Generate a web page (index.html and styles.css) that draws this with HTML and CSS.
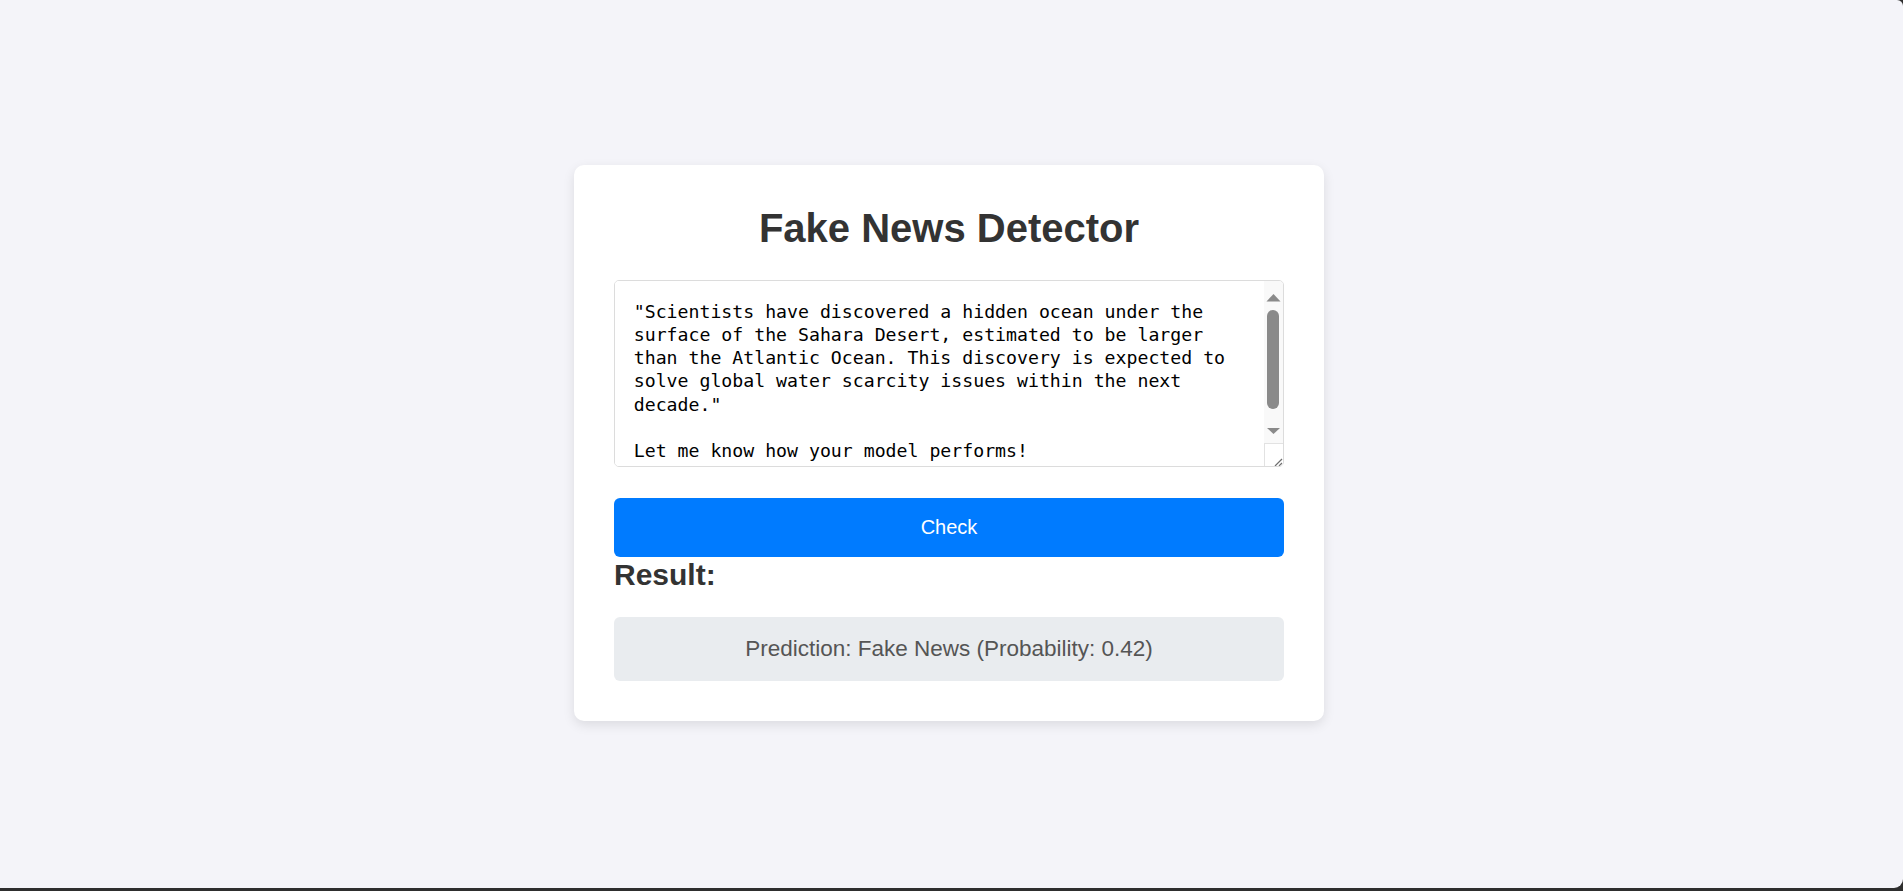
FILE: index.html
```html
<!DOCTYPE html>
<html lang="en">
<head>
<meta charset="utf-8">
<title>Fake News Detector</title>
<link rel="stylesheet" href="styles.css">
</head>
<body>
<div class="page">
  <div class="card">
    <h1 class="title">Fake News Detector</h1>
    <div class="input-wrap">
      <textarea class="news-input" spellcheck="false">"Scientists have discovered a hidden ocean under the surface of the Sahara Desert, estimated to be larger than the Atlantic Ocean. This discovery is expected to solve global water scarcity issues within the next decade."

Let me know how your model performs!
</textarea>
      <div class="scrollbar" aria-hidden="true">
        <div class="sb-btn sb-up">
          <svg width="19" height="25" viewBox="0 0 19 25"><polygon points="2.5,20.5 9.5,13 16.5,20.5" fill="#8a8a8a"/></svg>
        </div>
        <div class="sb-track"><div class="sb-thumb"></div></div>
        <div class="sb-btn sb-down">
          <svg width="19" height="25" viewBox="0 0 19 25"><polygon points="3,10 16,10 9.5,16" fill="#8a8a8a"/></svg>
        </div>
        <div class="sb-corner">
          <svg width="19" height="23" viewBox="0 0 19 23"><line x1="17" y1="15" x2="10" y2="22" stroke="#6f6f6f" stroke-width="1.2"/><line x1="17" y1="19" x2="14" y2="22" stroke="#6f6f6f" stroke-width="1.2"/></svg>
        </div>
      </div>
    </div>
    <button class="check-btn" type="button">Check</button>
    <h2 class="result-title">Result:</h2>
    <div class="result-box">Prediction: Fake News (Probability: 0.42)</div>
  </div>
</div>
</body>
</html>
```
FILE: styles.css
```css
html, body {
  margin: 0;
  padding: 0;
}
body {
  background: #2e2e2e;
  font-family: "Liberation Sans", Arial, sans-serif;
  height: 891px;
  overflow: hidden;
}
.page {
  box-sizing: border-box;
  height: 888px;
  padding-right: 5px;
  background: #f4f4f9;
  border-top-right-radius: 6px;
  border-bottom-right-radius: 9px;
  display: flex;
  align-items: center;
  justify-content: center;
}
.card {
  box-sizing: border-box;
  width: 750px;
  padding: 40px;
  background: #ffffff;
  border-radius: 10px;
  box-shadow: 0 4px 12px rgba(0, 0, 0, 0.1);
  display: flex;
  flex-direction: column;
  margin-top: -2px;
}
.title {
  margin: 0 0 29px;
  font-size: 40px;
  line-height: 46px;
  font-weight: bold;
  color: #333333;
  text-align: center;
}
.input-wrap {
  box-sizing: border-box;
  height: 187px;
  margin: 0 0 31px;
  border: 1.25px solid #dcdcdc;
  border-radius: 5px;
  overflow: hidden;
  display: flex;
  background: #ffffff;
}
.news-input {
  flex: 1;
  min-width: 0;
  box-sizing: border-box;
  height: 100%;
  margin: 0;
  padding: 18.5px 18.75px;
  border: none;
  font-family: "DejaVu Sans Mono", "Liberation Mono", monospace;
  font-size: 18.2px;
  line-height: 23.3px;
  color: #000000;
  background: #ffffff;
  resize: none;
  outline: none;
  overflow: hidden;
}
.scrollbar {
  width: 19px;
  flex: none;
  display: flex;
  flex-direction: column;
  background: #f9f9f9;
}
.sb-btn {
  height: 25px;
  flex: none;
}
.sb-btn svg,
.sb-corner svg {
  display: block;
}
.sb-track {
  flex: 1;
  padding: 4px 4px 0 3px;
}
.sb-thumb {
  height: 99px;
  border-radius: 6px;
  background: #8a8a8a;
}
.sb-corner {
  box-sizing: border-box;
  height: 23px;
  flex: none;
  background: #ffffff;
  border-top: 1px solid #e2e2e2;
  border-left: 1px solid #e2e2e2;
}
.check-btn {
  display: block;
  width: 100%;
  height: 59px;
  margin: 0;
  padding: 0;
  border: none;
  border-radius: 6px;
  background: #007bff;
  color: #ffffff;
  font-family: "Liberation Sans", Arial, sans-serif;
  font-size: 20px;
  line-height: 23px;
  cursor: pointer;
}
.result-title {
  margin: 0 0 25px;
  font-size: 30px;
  line-height: 35px;
  font-weight: bold;
  color: #333333;
}
.result-box {
  box-sizing: border-box;
  height: 64px;
  padding: 0 18.75px;
  border-radius: 6px;
  background: #e9ecef;
  color: #555555;
  font-size: 22.5px;
  line-height: 64px;
  text-align: center;
}
```
